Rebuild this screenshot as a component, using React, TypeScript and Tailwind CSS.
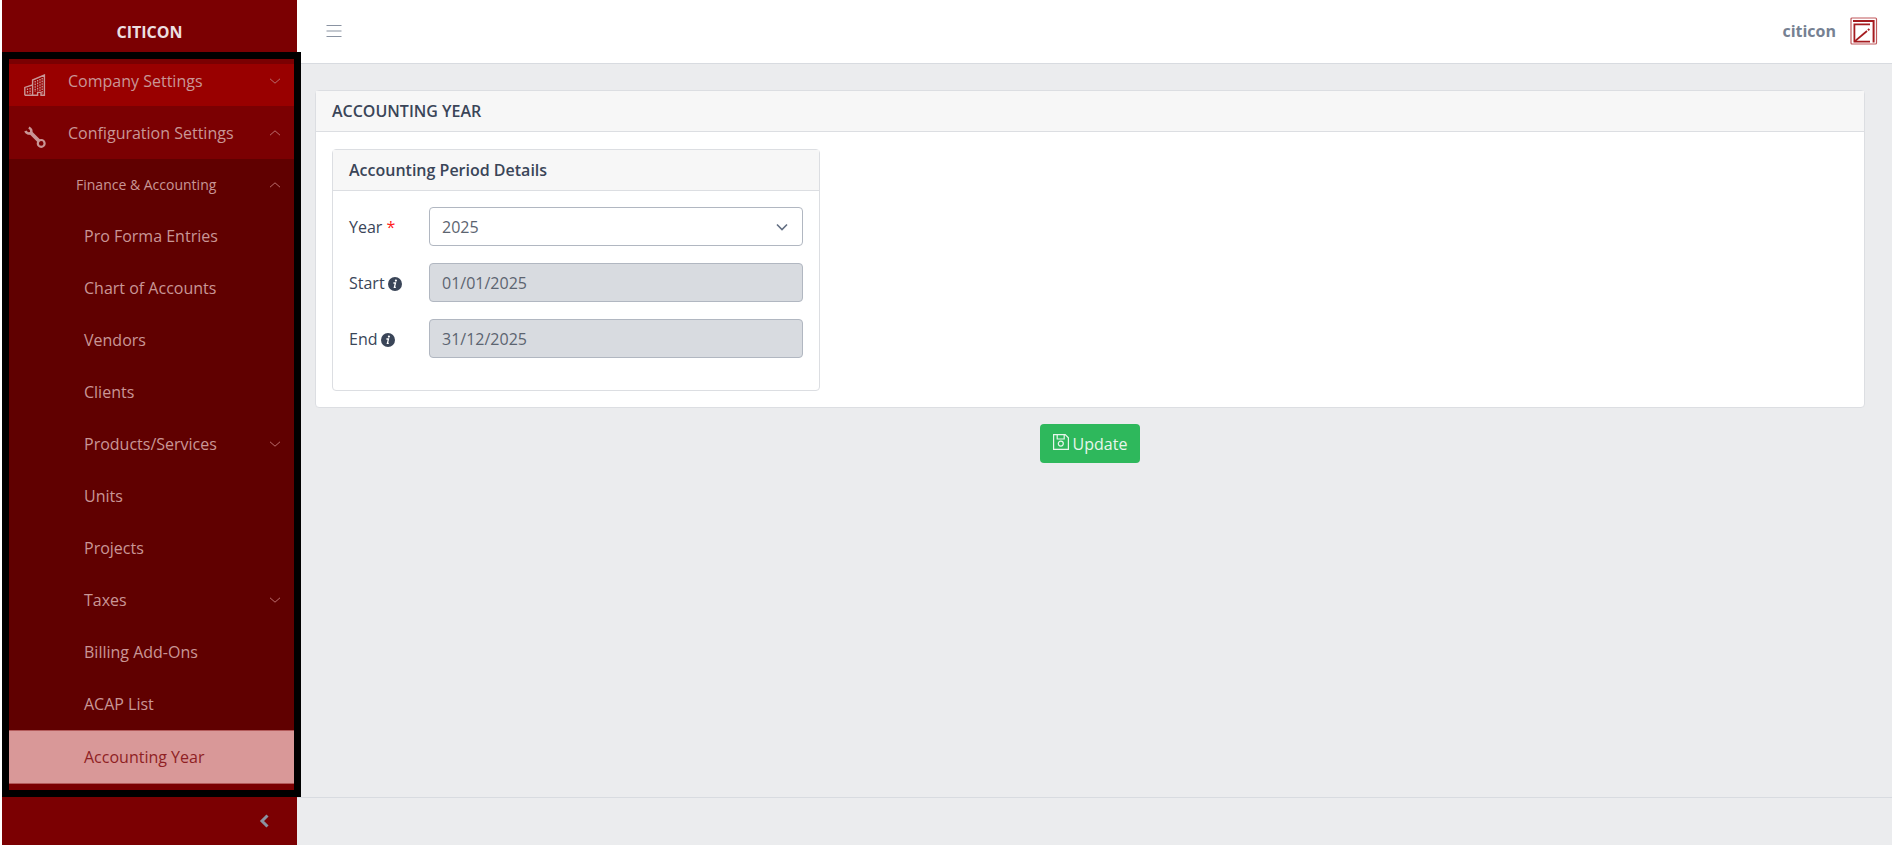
type Item = { label: string; expandable?: boolean; active?: boolean };

const items: Item[] = [
  { label: "Pro Forma Entries" },
  { label: "Chart of Accounts" },
  { label: "Vendors" },
  { label: "Clients" },
  { label: "Products/Services", expandable: true },
  { label: "Units" },
  { label: "Projects" },
  { label: "Taxes", expandable: true },
  { label: "Billing Add-Ons" },
  { label: "ACAP List" },
  { label: "Accounting Year", active: true },
];

function Chevron({ up = false }: { up?: boolean }) {
  return (
    <svg viewBox="0 0 12 8" className="ml-auto h-2 w-3 shrink-0 text-[#b96c6c]" fill="none" stroke="currentColor" aria-hidden="true">
      <path d={up ? "M1 6.2 6 1.8 11 6.2" : "M1 1.8 6 6.2 11 1.8"} />
    </svg>
  );
}

function MenuIcon() {
  return (
    <svg viewBox="0 0 16 14" className="h-[14px] w-4" fill="none" stroke="currentColor" strokeWidth="1.2" aria-hidden="true">
      <path d="M.5 1.5H15.5M.5 7H15.5M.5 12.5H15.5" />
    </svg>
  );
}

function BuildingIcon() {
  return (
    <svg viewBox="0 0 22 22" className="mt-2 h-[22px] w-[22px] shrink-0" fill="none" stroke="currentColor" strokeWidth="1.4" aria-hidden="true">
      <path d="M.8 21.2V13.4L8.6 11V6L20.4 1V21.2H17V18.4H13.6V21.2H.8M8.6 10.4V21.2" />
      <path d="M11.2 7V18M13.6 6V17M16 5V17M18.2 4V20" strokeWidth="1.3" strokeDasharray="1.6 1" />
      <path d="M3.5 14.5V20M6.1 14V20" strokeWidth="1.3" strokeDasharray="1.6 1" />
    </svg>
  );
}

function WrenchIcon() {
  return (
    <svg viewBox="0 0 22 22" className="mt-2 h-[22px] w-[22px] shrink-0" fill="none" stroke="currentColor" aria-hidden="true">
      <path d="M6 6 15.5 15.5" strokeWidth="3.8" />
      <path d="M4.8 1.6A4 4 0 0 1 7 7A4 4 0 0 1 1.4 5" strokeWidth="2.6" />
      <circle cx="17.2" cy="17.4" r="3.4" strokeWidth="2.2" />
    </svg>
  );
}

function InfoIcon() {
  return (
    <svg viewBox="0 0 14 14" className="mt-[2px] h-[14px] w-[14px] shrink-0" aria-hidden="true">
      <circle cx="7" cy="7" r="7" fill="currentColor" />
      <circle cx="7.9" cy="3.6" r="1.1" fill="#fff" />
      <path d="M5.4 6H7.5L6.4 10.4H7.8" fill="none" stroke="#fff" strokeWidth="1.3" />
    </svg>
  );
}

function SaveIcon() {
  return (
    <svg viewBox="0 0 16 16" className="mb-1 h-4 w-4" fill="none" stroke="currentColor" strokeWidth="1.2" aria-hidden="true">
      <path d="M.6.6H12.2L15.4 3.8V15.4H.6ZM4.2.6V5H11.2V.6" />
      <circle cx="7.8" cy="9.6" r="2.5" />
    </svg>
  );
}

function Logo() {
  return (
    <svg viewBox="0 0 28 28" className="h-7 w-7" fill="none" stroke="#a51c20" aria-hidden="true">
      <rect x="1" y="1" width="25.5" height="26" rx="1" stroke="#c0595c" strokeWidth="1.2" />
      <path d="M3 3.9H23.6V25.5" strokeWidth="2" />
      <path d="M20 7.4H4.4V24.6H20" strokeWidth="1.8" />
      <path d="M4.4 24.6 17 14" strokeWidth="1.8" />
      <path d="M18 13.2 19.4 12" strokeWidth="2" />
    </svg>
  );
}

function DateField({ id, label, value }: { id: string; label: string; value: string }) {
  return (
    <div className="flex items-center">
      <label htmlFor={id} className="flex w-20 shrink-0 items-center gap-[3px]">
        {label}
        <InfoIcon />
      </label>
      <input id={id} disabled defaultValue={value} className="h-[39px] min-w-0 flex-1 rounded-[4px] border border-[#b1b7c1] bg-[#d8dbe0] px-3 text-[#5c6470]" />
    </div>
  );
}

export default function App() {
  return (
    <div className="flex min-h-screen bg-white pl-[2px] font-['Open_Sans','Noto_Sans',sans-serif] text-[16px] leading-6 text-[#3a4558]">
      <aside className="flex w-[295px] shrink-0 flex-col bg-[#7b0002] text-[#c99696]">
        <div className="flex h-[52px] items-end justify-center pb-2 font-bold text-[#ecdfe0]">CITICON</div>
        <nav className="relative -mr-1 flex flex-1 flex-col border-[7px] border-black pt-[5px] pb-[6px]">
          <a href="#company" className="flex h-[42px] items-center bg-[#990000] pr-[13px] pb-2 pl-[15px]">
            <BuildingIcon />
            <span className="ml-[22px]">Company Settings</span>
            <Chevron />
          </a>
          <a href="#configuration" className="flex h-[53px] items-center pr-[13px] pl-[15px]">
            <WrenchIcon />
            <span className="ml-[22px]">Configuration Settings</span>
            <Chevron up />
          </a>
          <div className="flex flex-1 flex-col bg-[#600000]">
            <a href="#finance" className="flex h-[51px] items-center pr-[13px] pl-[67px] text-[14px]">
              Finance &amp; Accounting
              <Chevron up />
            </a>
            {items.map((item) => (
              <a
                key={item.label}
                href="#item"
                className={
                  item.active
                    ? "flex min-h-12 flex-1 items-center border-y border-[#b35a5a] bg-[#d99898] pr-[13px] pl-[75px] text-[#8f1f24]"
                    : "flex min-h-12 flex-1 items-center pr-[13px] pl-[75px]"
                }
              >
                {item.label}
                {item.expandable && <Chevron />}
              </a>
            ))}
          </div>
        </nav>
        <div className="flex h-12 items-center justify-end pr-7">
          <button type="button" aria-label="Collapse sidebar" className="text-[#8a93a2]">
            <svg viewBox="0 0 10 14" className="h-[14px] w-[10px]" fill="none" stroke="currentColor" strokeWidth="3" aria-hidden="true">
              <path d="M8.5 1.5 3 7 8.5 12.5" />
            </svg>
          </button>
        </div>
      </aside>
      <div className="flex min-w-0 flex-1 flex-col bg-[#ebecee]">
        <header className="flex h-16 items-center justify-between border-b border-[#d8dbe0] bg-white pr-[14px] pb-[2px] pl-[29px]">
          <button type="button" aria-label="Toggle menu" className="text-[#8a93a2]">
            <MenuIcon />
          </button>
          <div className="flex items-center gap-[14px] font-bold text-[#768192]">
            citicon
            <Logo />
          </div>
        </header>
        <main className="flex-1 pt-[26px] pr-[27px] pl-[18px]">
          <section className="rounded-[4px] border border-[#dcdee2] bg-white">
            <h1 className="border-b border-[#dcdee2] bg-[#f7f7f7] px-4 py-2 font-semibold">ACCOUNTING YEAR</h1>
            <div className="px-4 pt-[17px] pb-4">
              <div className="w-[488px] rounded-[4px] border border-[#dcdee2]">
                <h2 className="border-b border-[#dcdee2] bg-[#f7f7f7] px-4 py-2 font-semibold">Accounting Period Details</h2>
                <form className="flex flex-col gap-[17px] px-4 pt-4 pb-8">
                  <div className="flex items-center">
                    <label htmlFor="year" className="w-20 shrink-0">
                      Year <span className="text-[#ff2020]">*</span>
                    </label>
                    <div className="relative flex-1">
                      <select id="year" className="block h-[39px] w-full appearance-none rounded-[4px] border border-[#b1b7c1] bg-white px-3 text-[#5c6470]">
                        <option>2025</option>
                      </select>
                      <svg viewBox="0 0 12 8" className="pointer-events-none absolute top-4 right-[15px] h-2 w-3 text-[#636f83]" fill="none" stroke="currentColor" strokeWidth="1.6" aria-hidden="true">
                        <path d="M1 1.5 6 6.5 11 1.5" />
                      </svg>
                    </div>
                  </div>
                  <DateField id="start" label="Start" value="01/01/2025" />
                  <DateField id="end" label="End" value="31/12/2025" />
                </form>
              </div>
            </div>
          </section>
          <div className="mt-4 flex justify-center">
            <button type="button" className="flex h-[39px] items-center gap-1 rounded-[4px] bg-[#2eb85c] px-[13px] text-[#e8f6ec]">
              <SaveIcon />
              Update
            </button>
          </div>
        </main>
        <footer className="h-12 border-t border-[#d8dbe0]" />
      </div>
    </div>
  );
}
